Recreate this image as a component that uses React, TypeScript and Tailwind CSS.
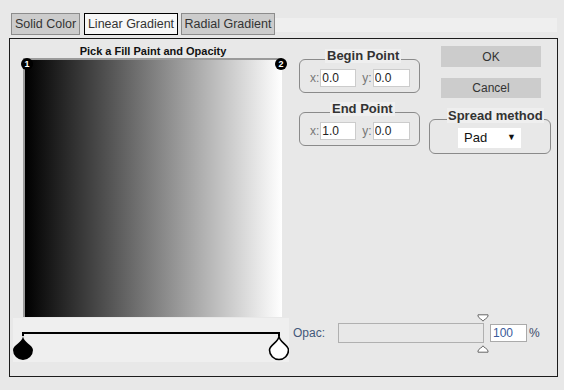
function Marker({ up }: { up?: boolean }) {
  return (
    <svg width="12" height="8" viewBox="0 0 12 8" className="block">
      {up ? (
        <path d="M6 0.8 C6 2 1 4 1 6 L1 7.2 L11 7.2 L11 6 C11 4 6 2 6 0.8 Z" fill="#fff" stroke="#666" strokeWidth="1" />
      ) : (
        <path d="M6 7.2 C6 6 1 4 1 2 L1 0.8 L11 0.8 L11 2 C11 4 6 6 6 7.2 Z" fill="#fff" stroke="#666" strokeWidth="1" />
      )}
    </svg>
  );
}

function PointBox({ title, x, y, legendLeft, mt }: { title: string; x: string; y: string; legendLeft: string; mt: string }) {
  return (
    <div className={`relative w-[121px] h-[34px] border border-[#8a8a8a] rounded-[6px] ${mt}`}>
      <span className={`absolute -top-[11px] ${legendLeft} bg-[#efefef] px-[2px] h-[14px] leading-[14px] text-[13px] font-bold text-[#333]`}>
        {title}
      </span>
      <div className="flex items-center pt-[9px] pl-[10px] text-[12px] text-[#777]">
        <span>x:</span>
        <input
          className="ml-[1px] w-[36px] h-[18px] bg-white border border-[#ccc] px-[1px] text-[12px] text-[#222] outline-none"
          defaultValue={x}
        />
        <span className="ml-[6px]">y:</span>
        <input
          className="ml-[1px] w-[37px] h-[18px] bg-white border border-[#ccc] px-[1px] text-[12px] text-[#222] outline-none"
          defaultValue={y}
        />
      </div>
    </div>
  );
}

export default function App() {
  return (
    <div className="w-[564px] h-[390px] bg-[#e8e8e8] pt-[13px] font-['Liberation_Sans',Arial,sans-serif] text-[#333] overflow-hidden">
      {/* tabs */}
      <div className="flex items-start pl-[11px] pr-[7px] h-[22px]">
        <div className="w-[69px] h-[22px] border border-[#8c8c8c] bg-[#cccccc] text-[12.5px] leading-[20px] text-center">
          Solid Color
        </div>
        <div className="ml-[4px] w-[94px] h-[22px] border border-black bg-[#f7f7f7] text-[12.5px] leading-[20px] text-center">
          Linear Gradient
        </div>
        <div className="ml-[3px] w-[94px] h-[22px] border border-[#8c8c8c] bg-[#cccccc] text-[12.5px] leading-[20px] text-center">
          Radial Gradient
        </div>
        <div className="flex-1 mt-[5px] h-[14px] bg-[#efefef]" />
      </div>

      {/* panel */}
      <div className="ml-[9px] mt-[3px] w-[549px] h-[339px] border border-[#1c1c1c] flex">
        {/* left column */}
        <div className="w-[279px] pl-[3px] flex flex-col">
          <div className="mt-[6px] h-[13px] leading-[13px] text-[11px] font-bold text-[#111] text-center pl-[4px]">
            Pick a Fill Paint and Opacity
          </div>
          <div className="relative ml-[10px] w-[259px] h-[259px] border-t-2 border-l-2 border-[#9a9a9a] bg-[linear-gradient(to_right,#000,#fff)]">
            <span className="absolute -top-[2px] -left-[4px] w-[12px] h-[12px] rounded-full bg-black text-white text-[9px] font-bold leading-[12px] text-center">
              1
            </span>
            <span className="absolute -top-[2px] -right-[5px] w-[12px] h-[12px] rounded-full bg-black text-white text-[9px] font-bold leading-[12px] text-center">
              2
            </span>
          </div>
          <div className="mt-[1px] w-[276px] h-[44px] bg-[#efefef]">
            <svg width="276" height="44" viewBox="0 0 276 44" className="block">
              <path d="M10 18 L10 15 L266 15 L266 18" fill="none" stroke="#000" strokeWidth="2" />
              <path d="M10 18 C10 24 0 27 0 32 A10 10 0 0 0 20 32 C20 27 10 24 10 18 Z" fill="#000" />
              <path d="M266 18 C266 24 256.5 27 256.5 32 A9.5 9.5 0 0 0 275.5 32 C275.5 27 266 24 266 18 Z" fill="#fff" stroke="#000" strokeWidth="1.6" />
            </svg>
          </div>
        </div>

        {/* right column */}
        <div className="flex-1 flex flex-col">
          <div className="flex mt-[7px] pl-[10px]">
            <div className="flex flex-col">
              <PointBox title="Begin Point" x="0.0" y="0.0" legendLeft="left-[25px]" mt="mt-[13px]" />
              <PointBox title="End Point" x="1.0" y="0.0" legendLeft="left-[30px]" mt="mt-[19px]" />
            </div>
            <div className="ml-[9px] flex flex-col">
              <button className="ml-[12px] w-[100px] h-[21px] bg-[#cccccc] text-[12px] text-[#333]">OK</button>
              <button className="ml-[12px] mt-[11px] w-[100px] h-[20px] bg-[#cccccc] text-[12px] text-[#333]">Cancel</button>
              <div className="relative mt-[21px] w-[122px] h-[35px] border border-[#8a8a8a] rounded-[6px]">
                <span className="absolute -top-[12px] left-[17px] bg-[#efefef] px-[1px] h-[15px] leading-[15px] text-[13px] font-bold text-[#333]">
                  Spread method
                </span>
                <div className="ml-[28px] mt-[8px] w-[63px] h-[20px] bg-white flex items-center justify-between pl-[6px] pr-[5px] text-[13px] text-[#111]">
                  <span>Pad</span>
                  <span className="text-[9px]">▼</span>
                </div>
              </div>
            </div>
          </div>

          <div className="mt-auto mb-[33px] flex items-center pl-[4px] h-[20px]">
            <span className="w-[45px] text-[12px] text-[#44587a]">Opac:</span>
            <div className="relative w-[146px] h-[20px] border border-[#b0b0b0] bg-[#e8e8e8]">
              <div className="absolute -right-[6px] -top-[10px]">
                <Marker />
              </div>
              <div className="absolute -right-[6px] -bottom-[11px]">
                <Marker up />
              </div>
            </div>
            <input
              className="ml-[6px] w-[37px] h-[18px] bg-white border border-[#aaa] px-[2px] text-[12px] text-[#3a5a9a] outline-none"
              defaultValue="100"
            />
            <span className="ml-[2px] text-[12px] text-[#3a4a6a]">%</span>
          </div>
        </div>
      </div>
    </div>
  );
}
